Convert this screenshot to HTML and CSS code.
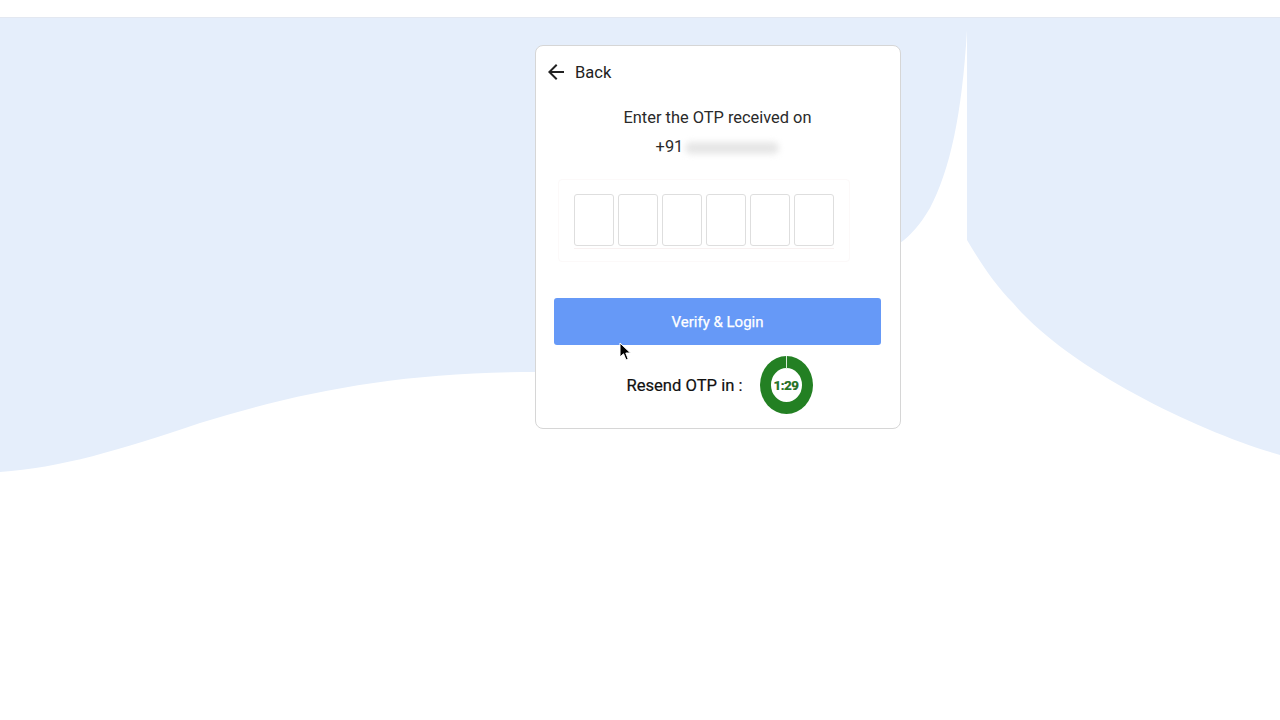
FILE: index.html
```html
<!DOCTYPE html>
<html lang="en">
<head>
<meta charset="utf-8">
<title>Verify OTP</title>
<link rel="stylesheet" href="styles.css">
</head>
<body>
<svg class="bg" width="1280" height="720" viewBox="0 0 1280 720" xmlns="http://www.w3.org/2000/svg">
  <path d="M0,18 H1280 V455 C1200,432 1070,370 1013,303 C995,285 980,262 967,240 V30 C962,115 950,170 930,208 C920,225 910,236 900,243 C820,330 650,372 535,372 C400,372 300,392 200,423 C120,450 60,468 0,472 Z" fill="#e5eefb"/>
</svg>
<header class="topbar"></header>
<main class="stage">
  <section class="card">
    <div class="back">
      <svg class="back-icon" width="24" height="24" viewBox="0 0 24 24"><path d="M20 11H7.83l5.59-5.59L12 4l-8 8 8 8 1.41-1.41L7.83 13H20v-2z" fill="#222"/></svg>
      <span>Back</span>
    </div>
    <div class="title">
      <div>Enter the OTP received on</div>
      <div>+91 <span class="blur"></span></div>
    </div>
    <div class="otp-wrap">
      <div class="otp">
        <div class="box"></div>
        <div class="box"></div>
        <div class="box"></div>
        <div class="box"></div>
        <div class="box"></div>
        <div class="box"></div>
      </div>
    </div>
    <button class="verify">Verify &amp; Login</button>
    <div class="resend">
      <span>Resend OTP in :</span>
      <div class="timer"><div class="timer-inner"></div><span class="timer-text">1:29</span></div>
    </div>
  </section>
</main>
<svg class="cursor" width="14" height="20" viewBox="0 0 14 20"><path d="M1 1 L1 15 L4.5 11.8 L7 18 L9.2 17 L6.8 11 L11.5 11 Z" fill="#000" stroke="#fff" stroke-width="1"/></svg>
</body>
</html>
```
FILE: styles.css
```css
html, body {
  margin: 0;
  padding: 0;
  width: 1280px;
  height: 720px;
  overflow: hidden;
  background: #ffffff;
  font-family: Roboto, "Liberation Sans", Arial, sans-serif;
  color: #222;
}
.bg {
  position: absolute;
  left: 0;
  top: 0;
  z-index: 0;
}
.topbar {
  position: relative;
  z-index: 1;
  height: 17px;
  background: #fff;
  border-bottom: 1px solid #e3e8f1;
}
.stage {
  position: relative;
  z-index: 1;
  padding-top: 27px;
  padding-left: 535px;
}
.card {
  width: 327px;
  background: #fff;
  border: 1px solid #d6d6d6;
  border-radius: 8px;
  padding: 14px 19px 14px 18px;
}
.back {
  display: flex;
  align-items: center;
  gap: 7px;
  height: 24px;
  margin-left: -10px;
  font-size: 16.5px;
  color: #222;
}
.back-icon {
  display: block;
}
.title {
  margin-top: 19px;
  text-align: center;
  font-size: 16.4px;
  line-height: 29px;
  color: #2a2a2a;
}
.blur {
  display: inline-block;
  width: 94px;
  height: 12px;
  vertical-align: middle;
  background: #e6e6e6;
  border-radius: 6px;
  filter: blur(3px);
  margin-left: -2px;
}
.otp-wrap {
  margin-top: 18px;
  margin-left: 4px;
  width: 290px;
  padding: 14px 0 12px 0;
  border: 1px solid #fcf9f9;
  border-radius: 4px;
}
.otp {
  display: flex;
  gap: 4px;
  margin-left: 15px;
  padding-bottom: 2px;
  border-bottom: 1px solid #f8f1f1;
  width: 260px;
}
.box {
  width: 38px;
  height: 50px;
  border: 1px solid #dedede;
  border-radius: 3px;
  background: #fff;
}
.verify {
  display: block;
  width: 327px;
  height: 47px;
  margin-top: 36px;
  margin-left: 0;
  border: none;
  border-radius: 3px;
  background: #6699f7;
  color: #fff;
  font-family: Roboto, "Liberation Sans", Arial, sans-serif;
  font-size: 15px;
  font-weight: 400;
  -webkit-text-stroke: 0.25px #fff;
  padding: 0;
}
.resend {
  display: flex;
  align-items: center;
  justify-content: center;
  gap: 17px;
  margin-top: 11px;
  padding-left: 4px;
  font-size: 16.6px;
  font-weight: 400;
  -webkit-text-stroke: 0.2px #111;
  color: #111;
}
.timer {
  position: relative;
  width: 53px;
  height: 58px;
  border-radius: 50%;
  background: #238023;
  display: flex;
  align-items: center;
  justify-content: center;
}
.timer::before {
  content: "";
  position: absolute;
  top: 0;
  left: 26px;
  width: 1px;
  height: 13px;
  background: #d9ecd9;
}
.timer-inner {
  width: 31px;
  height: 34px;
  border-radius: 50%;
  background: #fff;
}
.timer-text {
  position: absolute;
  left: 0;
  right: 0;
  top: 0;
  bottom: 0;
  display: flex;
  align-items: center;
  justify-content: center;
  font-size: 13.5px;
  font-weight: 700;
  color: #238023;
  letter-spacing: -0.5px;
  padding-bottom: 1px;
}
.cursor {
  position: absolute;
  left: 619px;
  top: 342px;
  z-index: 5;
}
```
